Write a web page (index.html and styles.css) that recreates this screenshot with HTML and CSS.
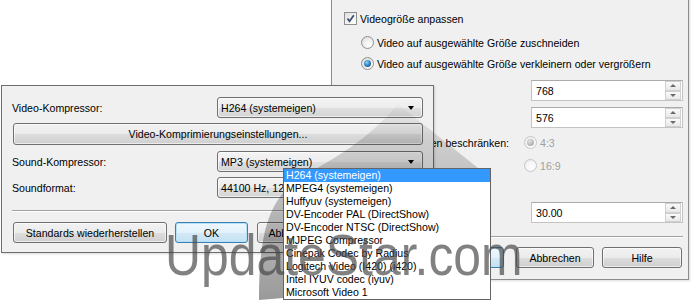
FILE: index.html
```html
<!DOCTYPE html>
<html lang="de">
<head>
<meta charset="utf-8">
<title>Video</title>
<link rel="stylesheet" href="styles.css">
</head>
<body>
<div class="stage">

  <div class="dlg dlg-right">
    <div class="row row-a">
      <span class="chk"><svg width="11" height="11" viewBox="0 0 11 11"><path d="M2.5 5.5 L4.5 8.2 L8.8 2.2" fill="none" stroke="#3b4b70" stroke-width="1.7"/></svg></span>
      <span class="txt">Videogröße anpassen</span>
    </div>
    <div class="row row-b"><span class="radio"></span><span class="txt">Video auf ausgewählte Größe zuschneiden</span></div>
    <div class="row row-c"><span class="radio on"></span><span class="txt">Video auf ausgewählte Größe verkleinern oder vergrößern</span></div>
    <div class="row row-spin row-d">
      <span class="flabel">Breite:</span>
      <div class="spin"><span class="spin-val">768</span><span class="spin-btns"><i class="sb up"></i><i class="sb dn"></i></span></div>
    </div>
    <div class="row row-spin row-e">
      <span class="flabel">Höhe:</span>
      <div class="spin"><span class="spin-val">576</span><span class="spin-btns"><i class="sb up"></i><i class="sb dn"></i></span></div>
    </div>
    <div class="row row-f">
      <span class="aspect-lbl">Auf Proportionen beschränken:</span>
      <span class="radio on dis"></span><span class="txt dim">4:3</span>
    </div>
    <div class="row row-g"><span class="radio dis"></span><span class="txt dim">16:9</span></div>
    <div class="row row-spin row-h">
      <span class="flabel">Bildrate:</span>
      <div class="spin"><span class="spin-val">30.00</span><span class="spin-btns"><i class="sb up"></i><i class="sb dn"></i></span></div>
    </div>
    <div class="sep sep-r"></div>
    <div class="btnrow btnrow-r">
      <span class="btn def btn-ok-r">OK</span>
      <span class="btn btn-ab-r">Abbrechen</span>
      <span class="btn btn-hi-r">Hilfe</span>
    </div>
  </div>

  <div class="dlg dlg-left">
    <div class="lrow lrow-1"><span>Video-Kompressor:</span><span class="combo">H264 (systemeigen)</span></div>
    <div class="btn wide">Video-Komprimierungseinstellungen...</div>
    <div class="lrow lrow-3"><span>Sound-Kompressor:</span><span class="combo">MP3 (systemeigen)</span></div>
    <div class="lrow lrow-4"><span>Soundformat:</span><span class="combo">44100 Hz, 128 kBit/s, Stereo</span></div>
    <div class="sep sep-l"></div>
    <div class="btnrow btnrow-l">
      <span class="btn btn-std">Standards wiederherstellen</span>
      <span class="btn def btn-ok-l">OK</span>
      <span class="btn btn-ab-l">Abbrechen</span>
    </div>
  </div>

  <svg class="wedge" width="693" height="300" viewBox="0 0 693 300">
    <defs>
      <linearGradient id="wg" x1="0" y1="100" x2="0" y2="300" gradientUnits="userSpaceOnUse">
        <stop offset="0" stop-color="#000" stop-opacity="0"/>
        <stop offset="0.2" stop-color="#000" stop-opacity="0.14"/>
        <stop offset="0.55" stop-color="#000" stop-opacity="0.24"/>
        <stop offset="1" stop-color="#000" stop-opacity="0.4"/>
      </linearGradient>
    </defs>
    <path d="M398 104 L478 168 L283 298 L259 300 C259 240 266 200 300 178 C335 158 368 140 398 104 Z" fill="url(#wg)"/>
  </svg>

  <ul class="droplist">
    <li class="sel">H264 (systemeigen)</li>
    <li>MPEG4 (systemeigen)</li>
    <li>Huffyuv (systemeigen)</li>
    <li>DV-Encoder PAL (DirectShow)</li>
    <li>DV-Encoder NTSC (DirectShow)</li>
    <li>MJPEG Compressor</li>
    <li>Cinepak Codec by Radius</li>
    <li>Logitech Video (I420) (i420)</li>
    <li>Intel IYUV codec (iyuv)</li>
    <li>Microsoft Video 1</li>
  </ul>

  <div class="watermark">UpdateStar.com</div>
</div>
</body>
</html>
```

FILE: styles.css
```css
html, body {
  margin: 0;
  padding: 0;
  background: #fff;
}

body {
  font-family: "Liberation Sans", Arial, sans-serif;
  font-size: 10.6px;
  color: #000;
}

.stage {
  position: relative;
  width: 693px;
  height: 300px;
  overflow: hidden;
  background: #fff;
}

/* ---------- dialogs ---------- */
.dlg {
  position: absolute;
  box-sizing: border-box;
  background: #f0f0f0;
  display: flex;
  flex-direction: column;
}

.dlg-right {
  left: 331px;
  top: -2px;
  width: 358px;
  height: 282px;
  border: 1px solid #8c8c8c;
  padding: 13px 5px 0 12px;
  box-shadow: 1px 1px 2px rgba(0, 0, 0, 0.15);
}

.dlg-left {
  left: 1px;
  top: 85px;
  width: 433px;
  height: 168px;
  border: 1px solid #6e6e6e;
  padding: 11px 10px 0 10px;
  box-shadow: 1px 1px 2px rgba(0, 0, 0, 0.15);
}

/* ---------- right dialog rows ---------- */
.row {
  display: flex;
  align-items: center;
  height: 13px;
  flex: none;
  white-space: nowrap;
}

.txt {
  margin-left: 3px;
}

.dim {
  color: #a0a0a0;
}

.row-b { margin-top: 11px; padding-left: 17px; }
.row-c { margin-top: 8px; padding-left: 17px; }
.row-spin { height: 21px; justify-content: space-between; }
.row-d { margin-top: 10px; }
.row-e { margin-top: 6px; }
.row-f { margin-top: 8px; }
.row-g { margin-top: 10px; padding-left: 180px; }
.row-h { margin-top: 30px; }

.flabel {
  padding-left: 17px;
}

.aspect-lbl {
  width: 165px;
  text-align: right;
  margin-right: 15px;
}

/* checkbox */
.chk {
  box-sizing: border-box;
  width: 13px;
  height: 13px;
  border: 1px solid #8e8f8f;
  background: linear-gradient(135deg, #dedede 0%, #f4f4f4 60%, #ffffff 100%);
  display: flex;
  align-items: center;
  justify-content: center;
  flex: none;
}

/* radio */
.radio {
  box-sizing: border-box;
  width: 13px;
  height: 13px;
  border-radius: 50%;
  border: 1px solid #8e8f8f;
  background: radial-gradient(circle at 65% 70%, #ffffff 0%, #f2f2f2 40%, #d4d4d4 100%);
  display: flex;
  align-items: center;
  justify-content: center;
  flex: none;
}

.radio.on::after {
  content: "";
  width: 7px;
  height: 7px;
  border-radius: 50%;
  background: radial-gradient(circle at 40% 35%, #8fd2f6 0%, #2a7ab8 55%, #0f3a66 100%);
}

.radio.dis {
  border-color: #c6c6c6;
  background: radial-gradient(circle at 65% 70%, #ffffff 0%, #f6f6f6 50%, #e6e6e6 100%);
}

.radio.on.dis::after {
  background: radial-gradient(circle at 40% 35%, #e4e4e4 0%, #b4b4b4 60%, #9a9a9a 100%);
}

/* spin box */
.spin {
  box-sizing: border-box;
  width: 152px;
  height: 21px;
  border: 1px solid #c3c3c3;
  border-top-color: #ababab;
  background: #fff;
  display: flex;
  align-items: center;
}

.spin-val {
  flex: 1;
  padding-left: 4px;
}

.spin-btns {
  display: flex;
  flex-direction: column;
  width: 16px;
  height: 19px;
  margin-right: 1px;
}

.sb {
  box-sizing: border-box;
  flex: 1;
  border: 1px solid #d0d0d0;
  background: linear-gradient(#fafafa, #e8e8e8);
  display: flex;
  align-items: center;
  justify-content: center;
}

.sb::after {
  content: "";
  width: 0;
  height: 0;
  border-left: 3px solid transparent;
  border-right: 3px solid transparent;
}

.sb.up::after { border-bottom: 3px solid #6a6a6a; }
.sb.dn::after { border-top: 3px solid #6a6a6a; }

/* separators */
.sep {
  height: 0;
  flex: none;
  border-top: 1px solid #a0a0a0;
  border-bottom: 1px solid #ffffff;
}

.sep-r { margin-top: 13px; }
.sep-l { margin-top: 12px; }

/* buttons */
.btnrow {
  display: flex;
  height: 21px;
  flex: none;
}

.btnrow-r {
  margin-top: 9px;
  justify-content: flex-end;
}

.btnrow-l {
  margin-top: 10px;
  padding-left: 1px;
}

.btn {
  box-sizing: border-box;
  height: 21px;
  border: 1px solid #707070;
  border-radius: 3px;
  background: linear-gradient(#f2f2f2 0%, #ebebeb 50%, #dddddd 51%, #cfcfcf 100%);
  box-shadow: inset 0 0 0 1px rgba(255, 255, 255, 0.6);
  display: flex;
  align-items: center;
  justify-content: center;
  white-space: nowrap;
  flex: none;
}

.btn.def {
  border-color: #3c7fb1;
  background: linear-gradient(#eef7fd 0%, #e3f1fb 50%, #d3e9f7 51%, #c4e1f3 100%);
  box-shadow: inset 0 0 0 1px #b5e0f8;
}

.btn-ok-r { width: 79px; }
.btn-ab-r { width: 78px; margin-left: 12px; }
.btn-hi-r { width: 80px; margin-left: 8px; margin-right: 1px; }

.btn-std { width: 154px; }
.btn-ok-l { width: 73px; margin-left: 8px; }
.btn-ab-l { width: 74px; margin-left: 9px; }

.btn.wide {
  height: 22px;
  margin-top: 5px;
  margin-left: 1px;
}

/* ---------- left dialog rows ---------- */
.lrow {
  display: flex;
  align-items: center;
  justify-content: space-between;
  height: 21px;
  flex: none;
  white-space: nowrap;
}

.lrow-3 { margin-top: 6px; }
.lrow-4 { margin-top: 5px; }

.combo {
  position: relative;
  box-sizing: border-box;
  width: 206px;
  height: 21px;
  border: 1px solid #707070;
  border-radius: 3px;
  background: linear-gradient(#f4f4f4 0%, #ededed 50%, #e0e0e0 51%, #d4d4d4 100%);
  box-shadow: inset 0 0 0 1px rgba(255, 255, 255, 0.6);
  display: flex;
  align-items: center;
  padding-left: 3px;
  overflow: hidden;
}

.combo::after {
  content: "";
  position: absolute;
  right: 8px;
  top: 8px;
  width: 0;
  height: 0;
  border-left: 3.5px solid transparent;
  border-right: 3.5px solid transparent;
  border-top: 4px solid #000;
}

/* ---------- overlays ---------- */
.wedge {
  position: absolute;
  left: 0;
  top: 0;
  pointer-events: none;
}

.droplist {
  position: absolute;
  left: 283px;
  top: 168px;
  width: 208px;
  box-sizing: border-box;
  margin: 0;
  padding: 0;
  list-style: none;
  background: #fff;
  border: 1px solid #646464;
}

.droplist li {
  height: 13px;
  line-height: 13px;
  padding-left: 2px;
  white-space: nowrap;
}

.droplist li.sel {
  background: #3399ff;
  color: #fff;
}

.watermark {
  position: absolute;
  left: 165px;
  top: 226px;
  font-family: "Liberation Sans", Arial, sans-serif;
  font-size: 58px;
  line-height: 58px;
  color: rgba(70, 70, 70, 0.68);
  white-space: nowrap;
  transform: scaleX(0.86);
  transform-origin: 0 0;
  pointer-events: none;
}
```
